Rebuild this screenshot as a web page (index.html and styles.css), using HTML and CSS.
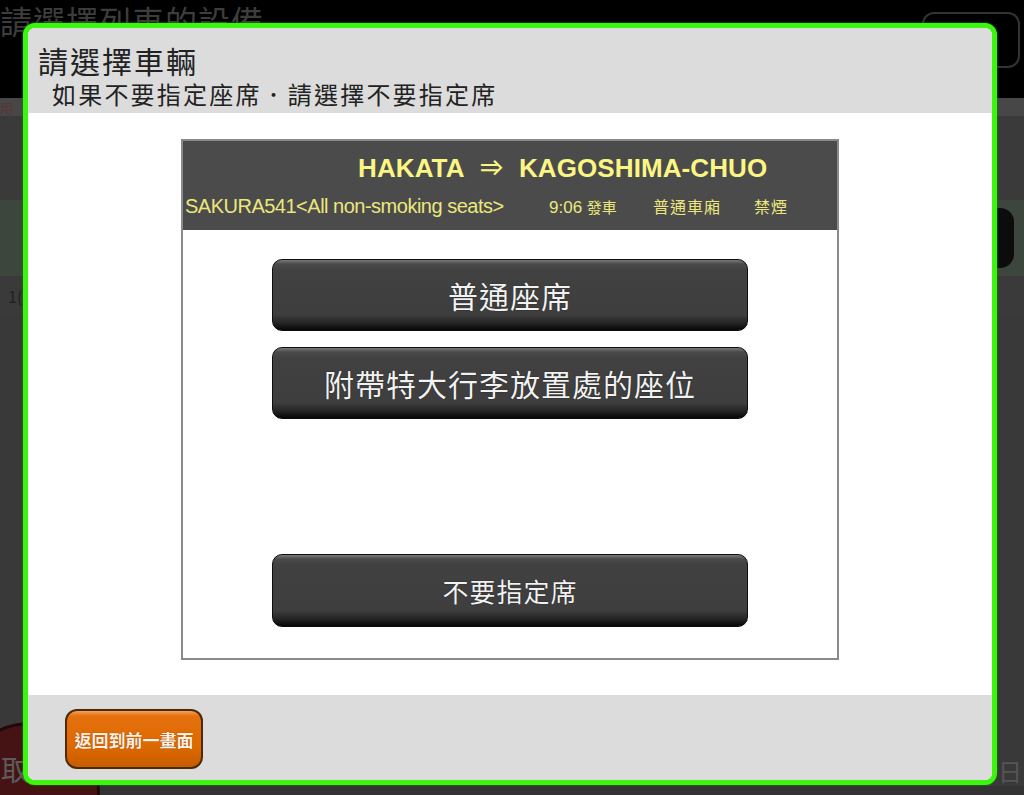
FILE: index.html
```html
<!DOCTYPE html>
<html lang="zh-Hant">
<head>
	<meta charset="UTF-8">
	<title>請選擇車輛</title>
	<link rel="stylesheet" href="styles.css">
</head>
<body>
	<div class="screen">
		<div class="topbar">
			<div class="topbar-title">請選擇列車的設備</div>
			<div class="topbar-btn"></div>
		</div>
		<div class="row row-head"><span class="row-mark">用</span></div>
		<div class="row row-gap"></div>
		<div class="row row-train"><span class="row-pill"></span></div>
		<div class="row row-num"><span class="row-text">1(</span></div>
		<div class="row row-fill"><span class="row-day">日</span></div>
		<div class="bottom-strip"><span class="bottom-tag">DEN DEN</span></div>
		<div class="cancel-round">取</div>
	</div>

	<div class="modal">
		<div class="modal-head">
			<div class="modal-title">請選擇車輛</div>
			<div class="modal-sub">如果不要指定座席．請選擇不要指定席</div>
		</div>
		<div class="modal-body">
			<div class="panel">
				<div class="panel-head">
					<div class="route">HAKATA &nbsp;⇒&nbsp; KAGOSHIMA-CHUO</div>
					<div class="train-info">
						<span class="train-name">SAKURA541&lt;All non-smoking seats&gt;</span>
						<span class="train-time">9:06 <small>發車</small></span>
						<span class="train-car">普通車廂</span>
						<span class="train-smoke">禁煙</span>
					</div>
				</div>
				<div class="panel-list">
					<a href="javascript:;" class="seat-btn">普通座席</a>
					<a href="javascript:;" class="seat-btn">附帶特大行李放置處的座位</a>
					<a href="javascript:;" class="seat-btn seat-btn-free">不要指定席</a>
				</div>
			</div>
		</div>
		<div class="modal-foot">
			<a href="javascript:;" class="back-btn">返回到前一畫面</a>
		</div>
	</div>
</body>
</html>
```

FILE: styles.css
```css
*{margin: 0px; padding: 0px; box-sizing: border-box;}
body{
	width: 1024px;
	height: 795px;
	overflow: hidden;
	background-color: #3b3b3b;
	font-family: "Noto Sans CJK TC", "Liberation Sans", sans-serif;
}
a{text-decoration: none;}

/* 背景画面 */
.screen{
	position: relative;
	height: 795px;
	overflow: hidden;
}
.topbar{
	display: flex;
	justify-content: space-between;
	height: 98px;
	background-color: #000;
	padding: 12px 4px 0 0;
}
.topbar-title{
	margin-top: -14px;
	font-size: 32px;
	line-height: 44px;
	color: #3d3d3d;
	letter-spacing: 1px;
}
.topbar-btn{
	width: 98px;
	height: 56px;
	border: 2px solid #333;
	border-radius: 12px;
}
.row{
	display: flex;
	justify-content: space-between;
	align-items: center;
}
.row-head{
	height: 18px;
	background-color: #474747;
}
.row-mark{
	font-size: 13px;
	color: #5a3434;
}
.row-gap{
	height: 84px;
	background-color: #3a3a3a;
}
.row-train{
	height: 76px;
	justify-content: flex-end;
	background-color: #3d463d;
}
.row-pill{
	width: 40px;
	height: 60px;
	margin-right: 10px;
	border-radius: 14px;
	background-color: #0c0c0c;
}
.row-num{
	height: 40px;
	background-color: #3a3a3a;
}
.row-text{
	padding-left: 8px;
	font-size: 16px;
	color: #202020;
}
.row-fill{
	height: 470px;
	align-items: flex-end;
	justify-content: flex-end;
	background-color: #393939;
}
.row-day{
	padding-right: 2px;
	font-size: 24px;
	line-height: 30px;
	color: #555;
}
.bottom-strip{
	height: 40px;
	padding: 12px 0 0 115px;
	background-color: #333;
}
.bottom-tag{
	display: inline-block;
	width: 136px;
	height: 20px;
	background-color: #4a3216;
	font-size: 8px;
	line-height: 12px;
	color: #7a6a50;
	text-align: center;
}
.cancel-round{
	position: absolute;
	left: -40px;
	top: 722px;
	width: 140px;
	height: 140px;
	border-radius: 50%;
	background-color: #451313;
	border: 3px solid #240808;
	padding: 26px 0 0 38px;
	font-size: 28px;
	line-height: 36px;
	color: #5c5c5c;
}

/* 弹出框 */
.modal{
	position: absolute;
	left: 23px;
	top: 23px;
	width: 974px;
	height: 762px;
	border: 5px solid #3cf40d;
	border-radius: 12px;
	overflow: hidden;
	display: flex;
	flex-direction: column;
	background-color: #fff;
	box-shadow: 0 0 2px #0a0;
}
.modal-head{
	height: 85px;
	background-color: #dcdcdc;
	padding: 13px 0 0 10px;
	color: #222;
}
.modal-title{
	font-size: 30px;
	line-height: 38px;
	letter-spacing: 2px;
}
.modal-sub{
	padding-left: 14px;
	font-size: 24px;
	line-height: 30px;
	letter-spacing: 2.2px;
}
.modal-body{
	flex: 1;
	padding-top: 26px;
	display: flex;
	justify-content: center;
	align-items: flex-start;
}
.panel{
	width: 658px;
	height: 521px;
	border: 2px solid #8a8a8a;
	display: flex;
	flex-direction: column;
}
.panel-head{
	height: 89px;
	background-color: #4b4b4b;
	padding: 10px 0 0 2px;
	color: #f7f27e;
}
.route{
	padding-left: 173px;
	font-family: "Liberation Sans", sans-serif;
	font-weight: bold;
	font-size: 26px;
	line-height: 34px;
	letter-spacing: 0.1px;
	color: #fbf684;
}
.train-info{
	display: flex;
	align-items: baseline;
	margin-top: 9px;
	font-size: 15px;
	color: #ece77c;
}
.train-name{
	width: 364px;
	font-family: "Liberation Sans", sans-serif;
	font-size: 20px;
	letter-spacing: -0.5px;
}
.train-time{
	width: 104px;
	font-family: "Liberation Sans", sans-serif;
	font-size: 17px;
}
.train-time small{
	font-family: "Noto Sans CJK TC", sans-serif;
	font-size: 15px;
}
.train-car{
	width: 101px;
	font-size: 16px;
	letter-spacing: 1px;
}
.train-smoke{
	font-size: 16px;
	letter-spacing: 1px;
}
.panel-list{
	flex: 1;
	display: flex;
	flex-direction: column;
	align-items: center;
	gap: 16px;
	padding: 29px 0 31px;
}
.seat-btn{
	display: flex;
	justify-content: center;
	align-items: center;
	width: 476px;
	height: 72px;
	border: 1px solid #0e0e0e;
	border-radius: 10px;
	background: linear-gradient(#7a7a7a 0px, #4a4a4a 4px, #414141 10px, #3e3e3e 78%, #242424 90%, #080808 100%);
	font-size: 30px;
	color: #f2f2f2;
	letter-spacing: 1px;
	text-shadow: 0 0 1px #000;
}
.seat-btn-free{
	margin-top: auto;
	height: 73px;
	font-size: 26px;
}
.modal-foot{
	height: 85px;
	background-color: #dcdcdc;
	padding: 14px 0 0 37px;
}
.back-btn{
	display: flex;
	justify-content: center;
	align-items: center;
	width: 138px;
	height: 60px;
	border: 2px solid #4a2a08;
	border-radius: 12px;
	background: linear-gradient(#f7a05a 0px, #e47010 5px, #df6a00 60%, #c85c00 100%);
	font-size: 17px;
	font-weight: bold;
	color: #fff1e6;
	text-shadow: 0 0 1px #7a3500;
}
```
